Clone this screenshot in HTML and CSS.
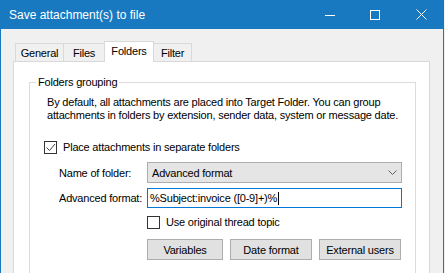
FILE: index.html
```html
<!DOCTYPE html>
<html lang="en">
<head>
    <meta charset="UTF-8">
    <title>Save attachment(s) to file</title>
    <link rel="stylesheet" href="styles.css">
</head>
<body>
    <div class="window">
        <div class="titlebar">
            <span class="title">Save attachment(s) to file</span>
            <div class="controls">
                <svg class="ctl-min" width="10" height="10" viewBox="0 0 10 10"><path d="M0 5.5h10" stroke="#fff" stroke-width="1"/></svg>
                <svg class="ctl-max" width="10" height="10" viewBox="0 0 10 10"><rect x="0.5" y="0.5" width="9" height="9" fill="none" stroke="#fff" stroke-width="1"/></svg>
                <svg class="ctl-close" width="11" height="11" viewBox="0 0 11 11"><path d="M0.5 0.5l10 10M10.5 0.5l-10 10" stroke="#fff" stroke-width="1"/></svg>
            </div>
        </div>

        <div class="content">
            <div class="tabs">
                <div class="tab tab-general">General</div>
                <div class="tab tab-files">Files</div>
                <div class="tab tab-folders active">Folders</div>
                <div class="tab tab-filter">Filter</div>
            </div>

            <div class="panel">
                <fieldset class="group">
                    <legend>Folders grouping</legend>
                    <p class="desc">By default, all attachments are placed into Target Folder. You can group<br>attachments in folders by extension, sender data, system or message date.</p>

                    <div class="check check-main">
                        <span class="box">
                            <svg width="11" height="11" viewBox="0 0 11 11"><path d="M1.5 5.5l3 3 5.5-6.5" fill="none" stroke="#444" stroke-width="1"/></svg>
                        </span>
                        <span>Place attachments in separate folders</span>
                    </div>

                    <div class="form-row row-name">
                        <span class="form-label">Name of folder:</span>
                        <div class="combo">
                            <span>Advanced format</span>
                            <svg width="9" height="5" viewBox="0 0 9 5"><path d="M0.5 0.5l4 4 4-4" fill="none" stroke="#606060" stroke-width="1"/></svg>
                        </div>
                    </div>

                    <div class="form-row row-format">
                        <span class="form-label">Advanced format:</span>
                        <div class="textbox">%Subject:invoice ([0-9]+)%<span class="caret"></span></div>
                    </div>

                    <div class="check check-thread">
                        <span class="box"></span>
                        <span>Use original thread topic</span>
                    </div>

                    <div class="buttons">
                        <button class="btn btn-vars">Variables</button>
                        <button class="btn">Date format</button>
                        <button class="btn">External users</button>
                    </div>
                </fieldset>
            </div>
        </div>
    </div>
</body>
</html>
```

FILE: styles.css
```css
body {
    margin: 0;
    width: 445px;
    height: 273px;
    overflow: hidden;
    background: #f0f0f0;
    font-family: "Liberation Sans", Arial, sans-serif;
    font-size: 11px;
    letter-spacing: -0.2px;
    color: #000;
}
.window {
    width: 444px;
    height: 273px;
    box-sizing: border-box;
    border-left: 1px solid #1879c0;
    border-right: 1px solid #1879c0;
    background: #f0f0f0;
    overflow: hidden;
}
.titlebar {
    height: 29px;
    background: #1879c0;
    display: flex;
    align-items: center;
    margin: 0 -1px;
    padding-left: 9px;
}
.title {
    color: #fff;
    font-size: 12px;
    letter-spacing: 0;
    flex: 1;
}
.controls {
    display: flex;
    align-items: center;
    height: 29px;
}
.ctl-min {
    margin-right: 35px;
}
.ctl-max {
    margin-right: 36px;
}
.ctl-close {
    margin-right: 17px;
}
.tabs {
    display: flex;
    align-items: flex-end;
    margin-left: 14px;
    padding-top: 12px;
}
.tab {
    box-sizing: border-box;
    height: 18px;
    border: 1px solid #d9d9d9;
    border-bottom: none;
    background: #f0f0f0;
    text-align: center;
    line-height: 18px;
    margin-left: -1px;
}
.tab-general {
    margin-left: 0;
    width: 49px;
}
.tab-files {
    width: 42px;
}
.tab-folders {
    width: 50px;
}
.tab-filter {
    width: 39px;
}
.tab.active {
    height: 21px;
    margin-bottom: -1px;
    background: #fff;
    position: relative;
    z-index: 1;
    line-height: 19px;
}
.panel {
    margin-left: 12px;
    width: 417px;
    height: 212px;
    box-sizing: border-box;
    border: 1px solid #d9d9d9;
    border-bottom: none;
    background: #fff;
}
.group {
    margin: 14px 0 0 15px;
    width: 387px;
    height: 197px;
    box-sizing: border-box;
    border: 1px solid #dcdcdc;
    border-bottom: none;
    padding: 0;
}
.group legend {
    margin-left: 6px;
    padding: 0 2px;
    line-height: 13px;
}
.desc {
    margin: 7px 0 0 17px;
    line-height: 13px;
    white-space: nowrap;
}
.check {
    display: flex;
    align-items: center;
    gap: 6px;
    line-height: 13px;
}
.box {
    width: 13px;
    height: 13px;
    box-sizing: border-box;
    border: 1px solid #333;
    background: #fff;
    display: flex;
    align-items: center;
    justify-content: center;
}
.check-main {
    margin: 19px 0 0 14px;
}
.form-row {
    display: flex;
    align-items: center;
    margin-left: 29px;
}
.form-label {
    width: 88px;
}
.row-name {
    margin-top: 8px;
}
.row-format {
    margin-top: 5px;
}
.combo {
    width: 255px;
    height: 21px;
    box-sizing: border-box;
    border: 1px solid #adadad;
    background: #e5e5e5;
    display: flex;
    align-items: center;
    justify-content: space-between;
    padding: 0 4px 0 4px;
}
.textbox {
    width: 255px;
    height: 20px;
    box-sizing: border-box;
    border: 1px solid #0078d7;
    background: #fff;
    display: flex;
    align-items: center;
    padding-left: 2px;
}
.caret {
    width: 1px;
    height: 13px;
    background: #000;
    margin-left: 1px;
}
.check-thread {
    margin: 8px 0 0 117px;
}
.buttons {
    display: flex;
    gap: 7px;
    margin: 10px 0 0 117px;
}
.btn {
    width: 82px;
    height: 21px;
    box-sizing: border-box;
    border: 1px solid #adadad;
    background: #e1e1e1;
    font-family: inherit;
    font-size: 11px;
    letter-spacing: -0.2px;
    color: #000;
    padding: 0;
}
.btn-vars {
    width: 76px;
}
```
